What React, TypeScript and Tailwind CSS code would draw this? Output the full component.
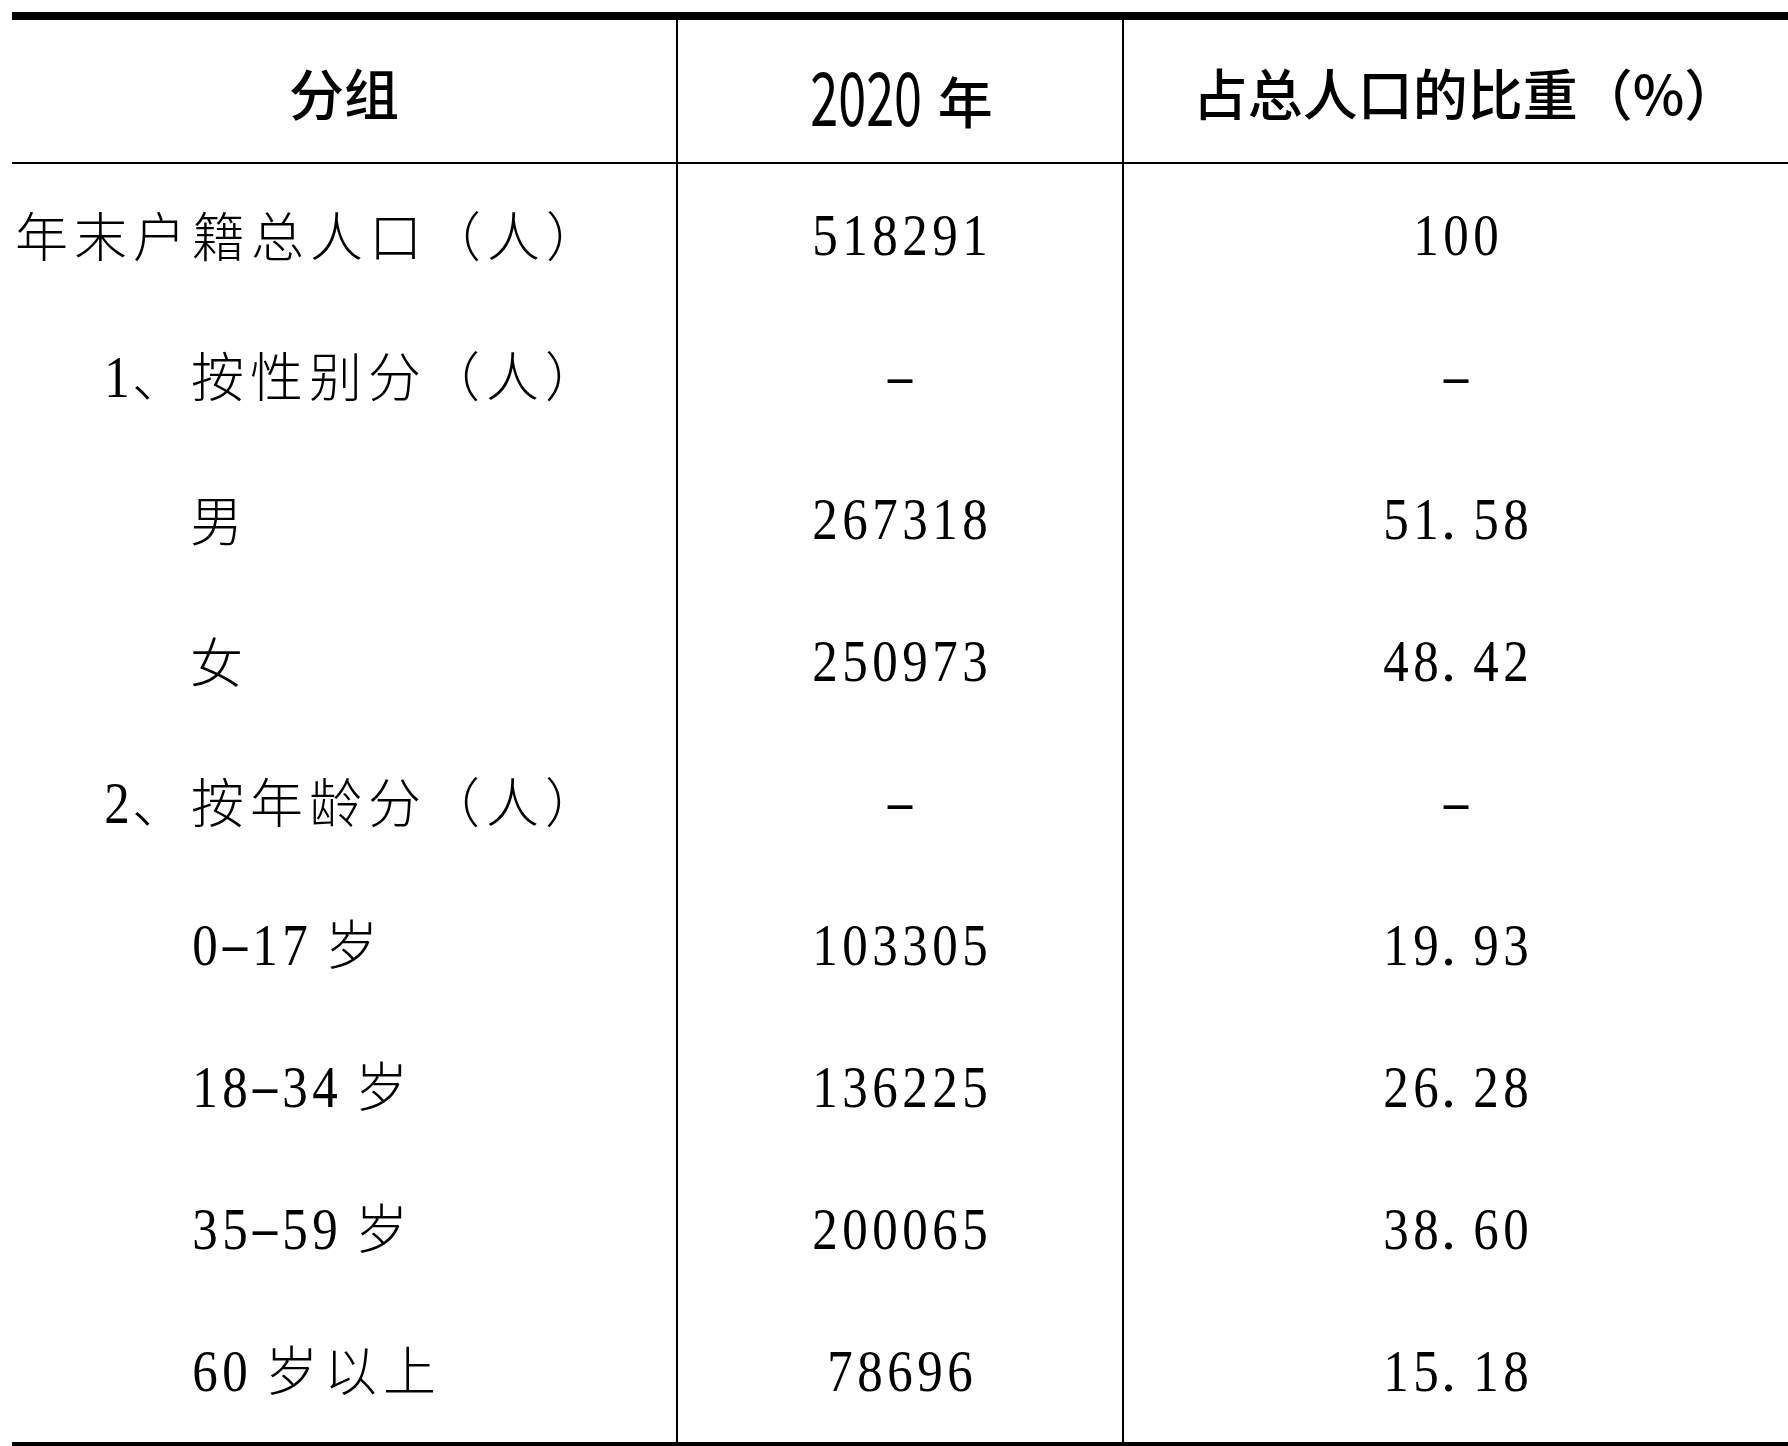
import React from 'react'

// ── Fonts ──────────────────────────────────────────────
const CN = "font-['Noto_Sans_CJK_SC',sans-serif] font-light text-[53px] leading-none tracking-[6px]"
const NUM = "font-['Liberation_Serif',serif] text-[60px] leading-none"
const HEAD = "font-['Noto_Sans_CJK_SC',sans-serif] font-medium text-[55px] leading-none"

type Part = { t: string; k: 'cn' | 'num' }

interface Row {
  label: Part[]
  indent: 0 | 1 | 2
  count: string
  share: string
}

const ROWS: Row[] = [
  { label: [{ t: '年末户籍总人口（人）', k: 'cn' }], indent: 0, count: '518291', share: '100' },
  { label: [{ t: '1', k: 'num' }, { t: '、按性别分（人）', k: 'cn' }], indent: 1, count: '-', share: '-' },
  { label: [{ t: '男', k: 'cn' }], indent: 2, count: '267318', share: '51.58' },
  { label: [{ t: '女', k: 'cn' }], indent: 2, count: '250973', share: '48.42' },
  { label: [{ t: '2', k: 'num' }, { t: '、按年龄分（人）', k: 'cn' }], indent: 1, count: '-', share: '-' },
  { label: [{ t: '0-17 ', k: 'num' }, { t: '岁', k: 'cn' }], indent: 2, count: '103305', share: '19.93' },
  { label: [{ t: '18-34 ', k: 'num' }, { t: '岁', k: 'cn' }], indent: 2, count: '136225', share: '26.28' },
  { label: [{ t: '35-59 ', k: 'num' }, { t: '岁', k: 'cn' }], indent: 2, count: '200065', share: '38.60' },
  { label: [{ t: '60 ', k: 'num' }, { t: '岁以上', k: 'cn' }], indent: 2, count: '78696', share: '15.18' },
]

const INDENT = ['pl-[3px]', 'pl-[90px]', 'pl-[178px]']

// digits in the FangSong style: narrow glyphs, dot and dash take a full digit cell
function Num({ v }: { v: string }) {
  return (
    <span className={NUM}>
      {v.split('').map((ch, i) => {
        if (ch === '.') return <span key={i} className="mr-[15px]">.</span>
        if (ch === ' ') return <span key={i}> </span>
        if (ch === '-') {
          return (
            <span key={i} className="inline-block mx-[5px] scale-x-[1.6] scale-y-[0.8]">
              -
            </span>
          )
        }
        return (
          <span key={i} className="inline-block scale-x-[0.85]">
            {ch}
          </span>
        )
      })}
    </span>
  )
}

function Label({ parts }: { parts: Part[] }) {
  return (
    <span className="whitespace-pre">
      {parts.map((p, i) =>
        p.k === 'num' ? <Num key={i} v={p.t} /> : <span key={i} className={CN}>{p.t}</span>
      )}
    </span>
  )
}

export default function App() {
  return (
    <div className="h-[1446px] w-[1788px] overflow-hidden bg-white pt-[12px] pl-[12px] text-black">
      <div className="grid grid-cols-[666px_446px_664px] border-t-8 border-b-8 border-black">
        {/* header */}
        <div className="h-[144px] flex items-center justify-center border-r-2 border-b-2 border-black">
          <span className={HEAD}>分组</span>
        </div>
        <div className="h-[144px] flex items-center justify-center border-r-2 border-b-2 border-black">
          <span className={HEAD}>
            <span className="inline-block font-normal text-[74px] -mx-[23px] scale-x-[0.68] translate-y-[3px]">2020</span>
            <span> 年</span>
          </span>
        </div>
        <div className="h-[144px] flex items-center justify-center border-b-2 border-black pl-[20px]">
          <span className={HEAD}>占总人口的比重（%）</span>
        </div>

        {/* body */}
        {ROWS.map((r, i) => (
          <React.Fragment key={i}>
            <div className={`h-[142px] flex items-center border-r-2 border-black ${INDENT[r.indent]}`}>
              <Label parts={r.label} />
            </div>
            <div className="h-[142px] flex items-center justify-center border-r-2 border-black">
              <Num v={r.count} />
            </div>
            <div className="h-[142px] flex items-center justify-center">
              <Num v={r.share} />
            </div>
          </React.Fragment>
        ))}
      </div>
    </div>
  )
}
